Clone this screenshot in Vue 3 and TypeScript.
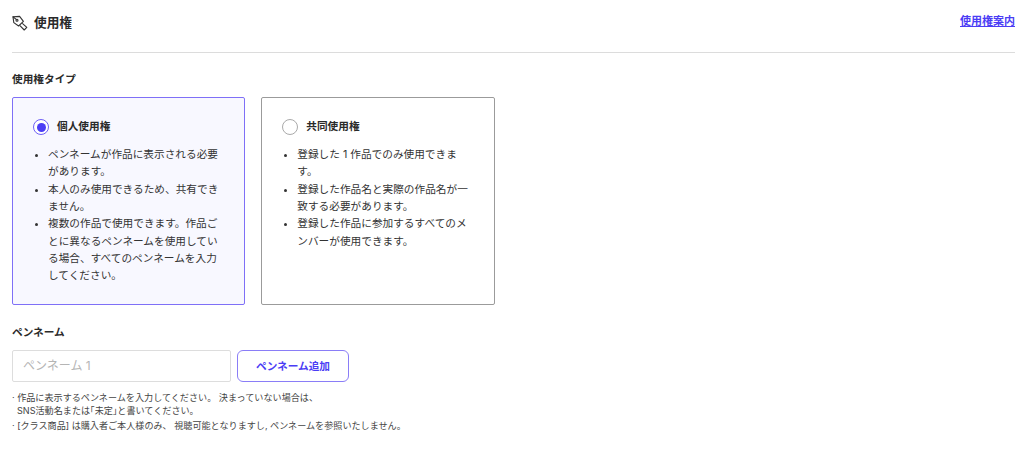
<script setup lang="ts">
interface LicenseType { title: string; active: boolean; items: string[] }
const types: LicenseType[] = [
  { title: '個人使用権', active: true, items: [
    'ペンネームが作品に表示される必要があります。',
    '本人のみ使用できるため、共有できません。',
    '複数の作品で使用できます。作品ごとに異なるペンネームを使用している場合、すべてのペンネームを入力してください。',
  ] },
  { title: '共同使用権', active: false, items: [
    '登録した 1 作品でのみ使用できます。',
    '登録した作品名と実際の作品名が一致する必要があります。',
    '登録した作品に参加するすべてのメンバーが使用できます。',
  ] },
]
</script>

<template>
  <div class="page">
    <header class="head">
      <div class="head-title">
        <svg class="pen" viewBox="0 0 16 16" width="16" height="16" fill="none" stroke="#333" stroke-width="1.1" stroke-linejoin="round" stroke-linecap="round">
          <path d="M1 1.8 L7.6 1.4 L11.4 6.4 L6.6 11 L1.8 7.6 Z" />
          <circle cx="5" cy="5.2" r="1" />
          <path d="M1 1.8 L4.2 4.4" />
          <path d="M10.6 8.6 L14.8 12.4 L12.2 15 L8.2 10.8" />
        </svg>
        <span>使用権</span>
      </div>
      <a class="guide" href="#">使用権案内</a>
    </header>

    <h3 class="label type-label">使用権タイプ</h3>
    <div class="cards">
      <div v-for="t in types" :key="t.title" class="card" :class="{ active: t.active }">
        <div class="card-title">
          <span class="radio"><span v-if="t.active" class="dot"></span></span>
          <span>{{ t.title }}</span>
        </div>
        <ul>
          <li v-for="item in t.items" :key="item">{{ item }}</li>
        </ul>
      </div>
    </div>

    <h3 class="label pen-label">ペンネーム</h3>
    <div class="input-row">
      <input class="input" placeholder="ペンネーム 1" />
      <button class="add" type="button">ペンネーム追加</button>
    </div>
    <p class="note first">· 作品に表示するペンネームを入力してください。 決まっていない場合は、<br /><span class="indent">SNS活動名または｢未定｣と書いてください。</span></p>
    <p class="note">· [クラス商品] は購入者ご本人様のみ、 視聴可能となりますし, ペンネームを参照いたしません。</p>
  </div>
</template>

<style>
html, body { margin: 0; background: #fff; }
</style>

<style scoped>
.page {
  box-sizing: border-box;
  width: 1024px;
  height: 460px;
  padding: 0 9px 0 12px;
  font-family: "Inter", "Noto Sans CJK JP", sans-serif;
  color: #2a2a2a;
  overflow: hidden;
}
.head {
  height: 53px;
  box-sizing: border-box;
  border-bottom: 1px solid #dcdcdc;
  display: flex;
  justify-content: space-between;
  padding-top: 13px;
}
.head-title {
  display: flex;
  align-items: flex-start;
  gap: 6px;
  font-size: 12.67px;
  font-weight: 700;
  line-height: 19px;
}
.pen { margin-top: 2px; }
.guide {
  font-size: 11px;
  line-height: 17px;
  font-weight: 700;
  color: #4b3df5;
  text-decoration: underline;
}
.label {
  margin: 0;
  font-size: 10.67px;
  font-weight: 700;
  line-height: 16px;
}
.type-label { margin-top: 19px; }
.cards {
  display: flex;
  gap: 16px;
  margin-top: 9px;
}
.card {
  box-sizing: border-box;
  width: 233.3px;
  height: 208px;
  border: 1px solid #9b9b9b;
  border-radius: 2px;
  padding: 21px 25.4px 0 20px;
}
.card.active {
  border-color: #7f70f7;
  background: #f8f8ff;
}
.card-title {
  display: flex;
  align-items: center;
  gap: 8px;
  font-size: 10.67px;
  font-weight: 700;
  line-height: 16px;
}
.radio {
  box-sizing: border-box;
  width: 16px;
  height: 16px;
  border-radius: 50%;
  border: 1.4px solid #aaa;
  background: #fff;
  display: flex;
  align-items: center;
  justify-content: center;
}
.active .radio { border-color: #6f60f6; }
.dot {
  width: 9px;
  height: 9px;
  border-radius: 50%;
  background: #4b3df5;
}
ul {
  margin: 11px 0 0;
  padding: 0 0 0 15px;
  font-size: 10.67px;
  line-height: 17.33px;
  color: #333;
}
.pen-label { margin-top: 20px; }
.input-row {
  display: flex;
  gap: 6px;
  margin-top: 9px;
}
.input {
  box-sizing: border-box;
  width: 219px;
  height: 31.5px;
  border: 1px solid #ddd;
  border-radius: 2px;
  padding: 0 10px;
  font-family: inherit;
  font-size: 12px;
  outline: none;
  background: #fff;
}
.input::placeholder { color: #b5b5b5; opacity: 1; }
.add {
  box-sizing: border-box;
  width: 112px;
  height: 31.5px;
  border: 1.3px solid #8a7df7;
  border-radius: 6px;
  background: #fff;
  color: #4b3df5;
  font-family: inherit;
  font-size: 10.67px;
  font-weight: 700;
  padding: 0;
}
.note {
  margin: 0;
  font-size: 9.1px;
  line-height: 12.5px;
  color: #444;
}
.note.first { margin-top: 10.5px; margin-bottom: 3px; }
.indent { padding-left: 5px; }
</style>
